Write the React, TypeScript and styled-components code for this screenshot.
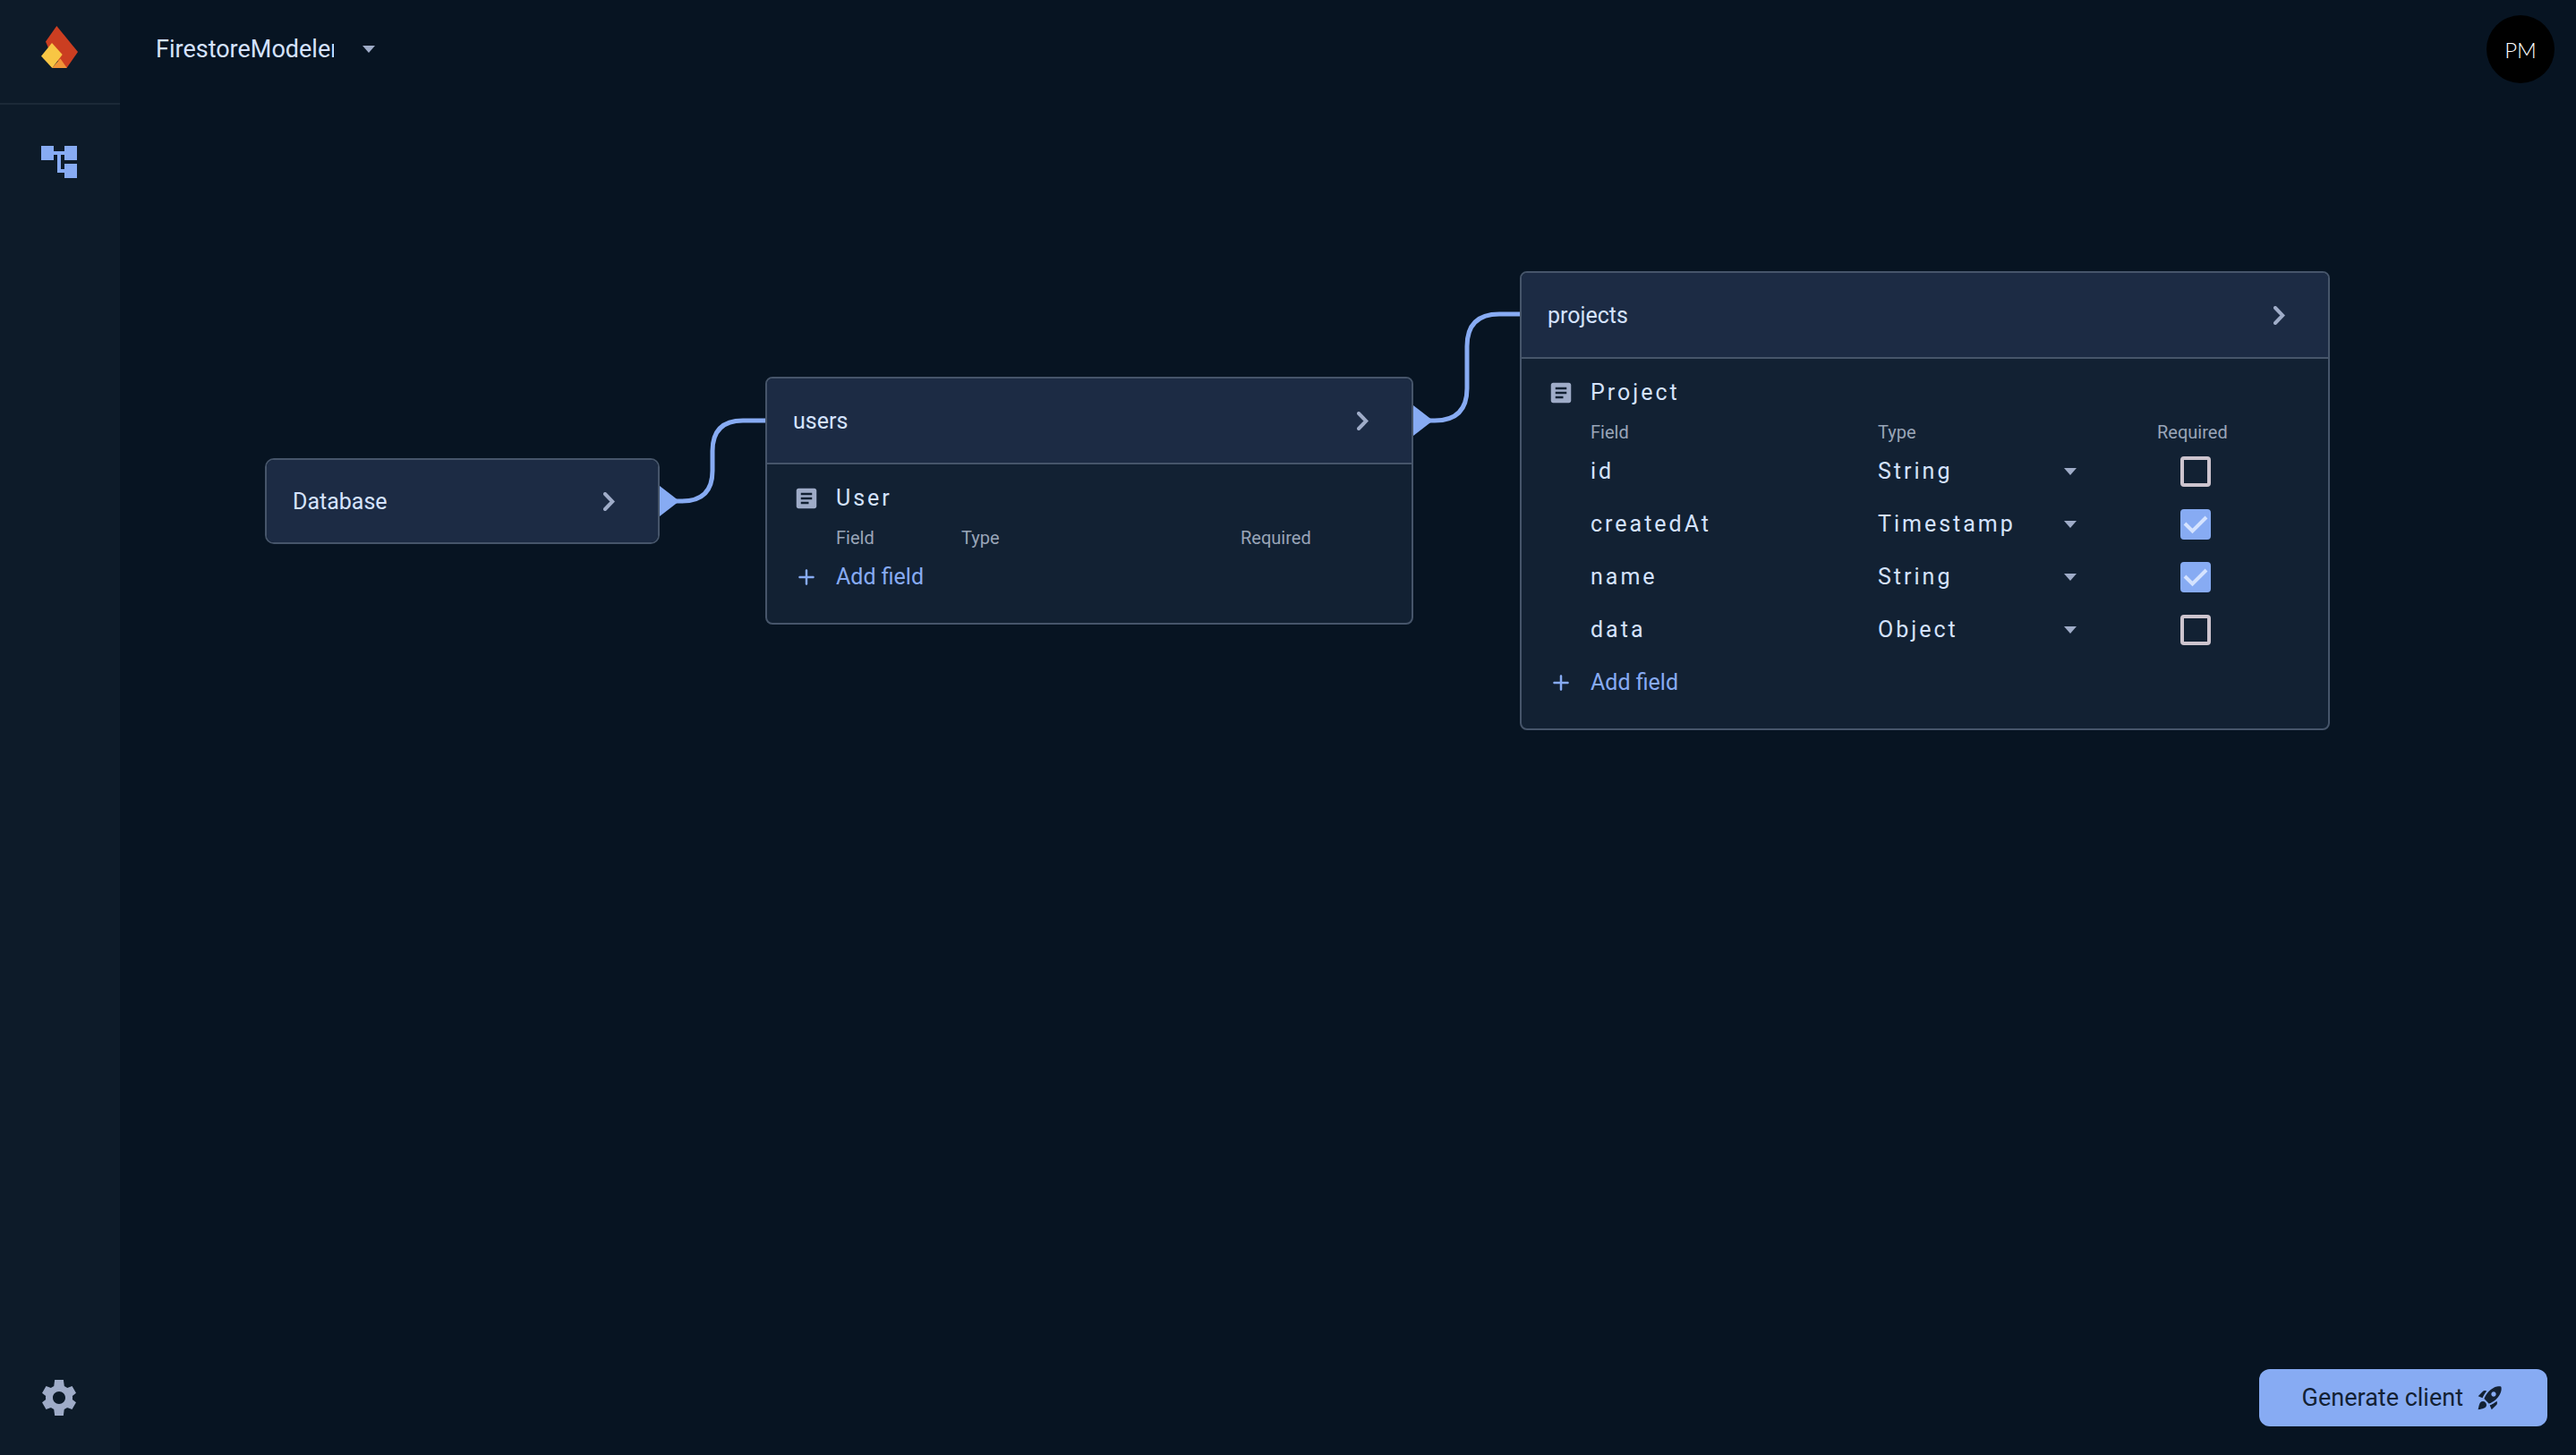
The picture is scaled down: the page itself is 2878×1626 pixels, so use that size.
import React, { useState } from "react";
import styled, { createGlobalStyle } from "styled-components";

const color = {
  canvas: "#071422",
  rail: "#0d1b29",
  railLine: "#1b2937",
  cardHead: "#1c2b44",
  cardBody: "#122133",
  border: "#46556a",
  text: "#d5e3ff",
  muted: "#99a5b8",
  icon: "#9facc8",
  accent: "#87abf3",
  accentText: "#132133",
  box: "#cdc4ce",
};

const GlobalStyle = createGlobalStyle`
  *, *::before, *::after { box-sizing: border-box; }
  body {
    margin: 0;
    background: ${color.canvas};
    color: ${color.text};
    font-family: Roboto, "Liberation Sans", sans-serif;
  }
  button, select, input {
    margin: 0;
    padding: 0;
    border: 0;
    background: none;
    color: inherit;
    font: inherit;
  }
  button { cursor: pointer; }
  svg { display: block; }
`;

const Shell = styled.div`
  display: grid;
  grid-template-columns: 134px 1fr;
  min-height: 100vh;
`;

const Rail = styled.nav`
  display: flex;
  flex-direction: column;
  background: ${color.rail};
`;

const RailLogo = styled.a`
  display: grid;
  place-items: center;
  height: 117px;
  padding: 0 2px 10px 0;
  border-bottom: 2px solid ${color.railLine};
`;

const RailItems = styled.div`
  display: flex;
  flex: 1;
  flex-direction: column;
  align-items: center;
  justify-content: space-between;
  padding: 40px 2px 40px 0;
`;

const RailButton = styled.button<{ $active?: boolean }>`
  color: ${(p) => (p.$active ? color.accent : color.icon)};
`;

const Main = styled.main`
  display: flex;
  flex-direction: column;
  min-width: 0;
`;

const TopBar = styled.header`
  display: flex;
  align-items: center;
  justify-content: space-between;
  height: 110px;
  padding: 0 24px 0 40px;
`;

const ProjectPicker = styled.label`
  display: flex;
  align-items: center;
  gap: 32px;
  color: ${color.icon};
`;

const ProjectSelect = styled.select`
  appearance: none;
  width: 199px;
  overflow: hidden;
  color: ${color.text};
  font-size: 27px;
  line-height: 36px;
`;

const Avatar = styled.button`
  width: 76px;
  height: 76px;
  border-radius: 50%;
  background: #000;
  color: #fff;
  font-family: Lato, sans-serif;
  font-size: 24px;
  font-weight: 300;
`;

const Canvas = styled.section`
  position: relative;
  flex: 1;
  overflow: hidden;
`;

const Links = styled.svg`
  position: absolute;
  top: 0;
  left: 0;
  width: 100%;
  height: 100%;
`;

const Card = styled.article<{ $x: number; $y: number; $width: number; $open: boolean }>`
  position: absolute;
  top: ${(p) => p.$y}px;
  left: ${(p) => p.$x}px;
  width: ${(p) => p.$width}px;
  overflow: hidden;
  border: 2px solid ${color.border};
  border-radius: ${(p) => (p.$open ? 8 : 10)}px;
  background: ${color.cardBody};
`;

const CardHead = styled.header<{ $open: boolean }>`
  display: flex;
  align-items: center;
  justify-content: space-between;
  height: ${(p) => (p.$open ? 96 : 92)}px;
  padding: 0 48px 0 29px;
  border-bottom: ${(p) => (p.$open ? `2px solid ${color.border}` : "0")};
  background: ${color.cardHead};
  color: ${color.icon};
`;

const CardTitle = styled.h2`
  margin: 0;
  color: ${color.text};
  font-size: 25px;
  font-weight: 400;
`;

const CardBody = styled.div`
  padding: 8px 0 22px;
`;

const IconRow = styled.div`
  display: grid;
  grid-template-columns: 32px 1fr;
  align-items: center;
  justify-items: start;
  gap: 16px;
  height: 59px;
  padding-left: 29px;
  color: ${color.icon};
`;

const ModelName = styled.h3`
  margin: 0;
  color: ${color.text};
  font-size: 25px;
  font-weight: 400;
  letter-spacing: 3px;
`;

const FieldTable = styled.table`
  width: 100%;
  table-layout: fixed;
  border-spacing: 0;
`;

const HeadCell = styled.th<{ $width?: number; $first?: boolean }>`
  width: ${(p) => (p.$width ? `${p.$width}px` : "auto")};
  height: 29px;
  padding: 0 0 0 ${(p) => (p.$first ? 77 : 0)}px;
  color: ${color.muted};
  font-size: 20px;
  font-weight: 400;
  line-height: 24px;
  text-align: left;
`;

const NameCell = styled.th`
  height: 59px;
  padding: 0 0 0 77px;
  font-size: 25px;
  font-weight: 400;
  letter-spacing: 3px;
  line-height: 32px;
  text-align: left;
`;

const Cell = styled.td`
  height: 59px;
  padding: 0;
`;

const TypePicker = styled.label`
  display: grid;
  align-items: center;
  width: 222px;
  color: ${color.icon};

  > * { grid-area: 1 / 1; }
  > svg { justify-self: end; pointer-events: none; }
`;

const TypeSelect = styled.select`
  appearance: none;
  color: ${color.text};
  font-size: 25px;
  letter-spacing: 3px;
  line-height: 32px;
`;

const Tick = styled.label`
  display: grid;
  width: 34px;
  height: 34px;
  margin-left: 26px;
  color: ${color.text};

  > * { grid-area: 1 / 1; }
  > svg { visibility: hidden; pointer-events: none; }
  > input:checked + svg { visibility: visible; }
`;

const TickBox = styled.input`
  appearance: none;
  border: 4px solid ${color.box};
  border-radius: 4px;

  &:checked {
    border-color: ${color.accent};
    background: ${color.accent};
  }
`;

const AddField = styled(IconRow).attrs({ as: "button", type: "button" })`
  width: 100%;
  color: ${color.accent};
  font-size: 25px;
`;

const Generate = styled.button`
  position: absolute;
  right: 32px;
  bottom: 32px;
  display: flex;
  align-items: center;
  gap: 14px;
  height: 64px;
  padding: 0 48px;
  border-radius: 12px;
  background: ${color.accent};
  color: ${color.accentText};
  font-size: 27px;
`;

const Glyph = ({ d, size }: { d: string; size: number }) => (
  <svg width={size} height={size} viewBox="0 0 24 24" fill="currentColor" aria-hidden="true">
    <path d={d} />
  </svg>
);

const glyphs = {
  tree: "M22 11V3h-7v3H9V3H2v8h7V8h2v10h4v3h7v-8h-7v3h-2V8h2v3z",
  gear: "M19.44 12.99l.01-.02c.04-.31.07-.64.07-.97 0-.33-.03-.66-.07-1l.01.02 2.04-1.62-2.23-3.92-2.67.96.01.01c-.52-.4-1.09-.74-1.71-1h.01L14.44 2H9.57l-.44 3.45h.01c-.62.26-1.19.6-1.71 1l.01-.01-2.68-.97-2.24 3.92 2.04 1.63.01-.02c-.04.33-.07.66-.07.99 0 .33.03.66.07.97l.01.02-2.06 1.63 2.24 3.92 2.68-.97-.02-.04c.53.41 1.1.75 1.73 1.01h-.03L9.58 22h4.85l.44-3.47h-.01c.62-.26 1.2-.6 1.73-1.01l-.02.04 2.68.97 2.24-3.92zM12 15.5c-1.93 0-3.5-1.57-3.5-3.5s1.57-3.5 3.5-3.5 3.5 1.57 3.5 3.5-1.57 3.5-3.5 3.5z",
  article:
    "M19 3H5c-1.1 0-2 .9-2 2v14c0 1.1.9 2 2 2h14c1.1 0 2-.9 2-2V5c0-1.1-.9-2-2-2zm-5 14H7v-2h7v2zm3-4H7v-2h10v2zm0-4H7V7h10v2z",
  add: "M18 13h-5v5c0 .55-.45 1-1 1s-1-.45-1-1v-5H6c-.55 0-1-.45-1-1s.45-1 1-1h5V6c0-.55.45-1 1-1s1 .45 1 1v5h5c.55 0 1 .45 1 1s-.45 1-1 1z",
  rocket:
    "M9.19 6.35c-2.04 2.29-3.44 5.58-3.57 5.89L2 10.69l4.05-4.05c.47-.47 1.15-.68 1.81-.55l1.33.26zM11.17 17s3.74-1.55 5.89-3.7c5.4-5.4 4.5-9.62 4.21-10.57-.95-.3-5.17-1.19-10.57 4.21C8.55 9.09 7 12.83 7 12.83L11.17 17zm6.48-2.19c-2.29 2.04-5.58 3.44-5.89 3.57L13.31 22l4.05-4.05c.47-.47.68-1.15.55-1.81l-.26-1.33zM9 18c0 .83-.34 1.58-.88 2.12C6.94 21.3 2 22 2 22s.7-4.94 1.88-6.12C4.42 15.34 5.17 15 6 15c1.66 0 3 1.34 3 3zm4-9c0-1.1.9-2 2-2s2 .9 2 2-.9 2-2 2-2-.9-2-2z",
};

const FlameLogo = () => (
  <svg width="41" height="47" viewBox="0 0 41 47" aria-hidden="true">
    <path d="M17.3 0 41 29 28.5 47 12 34 5 17.5z" fill="#cb3e21" />
    <path d="M12 47 21.5 36.5 28.8 47z" fill="#f09437" />
    <path d="M12 19 23.7 32 12.3 47 0 33.7z" fill="#f8c644" />
  </svg>
);

const Chevron = () => (
  <svg width="13" height="21" viewBox="0 0 13 21" fill="none" stroke="currentColor" strokeWidth="4" strokeLinecap="round" aria-hidden="true">
    <path d="M2 2 10.3 10.5 2 19" />
  </svg>
);

const Caret = () => (
  <svg width="14" height="8" viewBox="0 0 14 8" fill="currentColor" aria-hidden="true">
    <path d="M0 0h14L7 8z" />
  </svg>
);

const types = ["String", "Timestamp", "Object", "Number", "Boolean"];

type Field = { name: string; type: string; required: boolean };
type Node = { title: string; x: number; y: number; width: number; model?: string; fields?: Field[] };

const nodes: Node[] = [
  { title: "Database", x: 162, y: 402, width: 441 },
  { title: "users", x: 721, y: 311, width: 724, model: "User", fields: [] },
  {
    title: "projects",
    x: 1564,
    y: 193,
    width: 905,
    model: "Project",
    fields: [
      { name: "id", type: "String", required: false },
      { name: "createdAt", type: "Timestamp", required: true },
      { name: "name", type: "String", required: true },
      { name: "data", type: "Object", required: false },
    ],
  },
];

/* A connector leaves the right edge of one card and enters the head of the next. */
const links = [
  { x1: 603, y1: 450, x2: 721, y2: 360, mid: 662, r: 34 },
  { x1: 1445, y1: 360, x2: 1564, y2: 241, mid: 1505, r: 36 },
];

function FieldRow({ field }: { field: Field }) {
  const [type, setType] = useState(field.type);
  const [required, setRequired] = useState(field.required);
  return (
    <tr>
      <NameCell scope="row">{field.name}</NameCell>
      <Cell>
        <TypePicker>
          <TypeSelect aria-label={`${field.name} type`} value={type} onChange={(e) => setType(e.target.value)}>
            {types.map((t) => (
              <option key={t}>{t}</option>
            ))}
          </TypeSelect>
          <Caret />
        </TypePicker>
      </Cell>
      <Cell>
        <Tick>
          <TickBox
            type="checkbox"
            aria-label={`${field.name} required`}
            checked={required}
            onChange={(e) => setRequired(e.target.checked)}
          />
          <svg width="34" height="34" viewBox="0 0 34 34" fill="none" stroke="currentColor" strokeWidth="4" aria-hidden="true">
            <path d="M5 16 13.5 24.5 29 9" />
          </svg>
        </Tick>
      </Cell>
    </tr>
  );
}

function NodeCard({ node }: { node: Node }) {
  const open = Boolean(node.model);
  return (
    <Card $x={node.x} $y={node.y} $width={node.width} $open={open}>
      <CardHead $open={open}>
        <CardTitle>{node.title}</CardTitle>
        <button type="button" aria-label={`Expand ${node.title}`}>
          <Chevron />
        </button>
      </CardHead>
      {open && (
        <CardBody>
          <IconRow>
            <Glyph d={glyphs.article} size={30} />
            <ModelName>{node.model}</ModelName>
          </IconRow>
          <FieldTable>
            <thead>
              <tr>
                <HeadCell scope="col" $first>Field</HeadCell>
                <HeadCell scope="col" $width={312}>Type</HeadCell>
                <HeadCell scope="col" $width={191}>Required</HeadCell>
              </tr>
            </thead>
            <tbody>
              {node.fields?.map((f) => (
                <FieldRow key={f.name} field={f} />
              ))}
            </tbody>
          </FieldTable>
          <AddField>
            <Glyph d={glyphs.add} size={30} />
            <span>Add field</span>
          </AddField>
        </CardBody>
      )}
    </Card>
  );
}

export default function App() {
  return (
    <>
      <GlobalStyle />
      <Shell>
        <Rail aria-label="Main">
          <RailLogo href="#" aria-label="Home">
            <FlameLogo />
          </RailLogo>
          <RailItems>
            <RailButton type="button" $active aria-label="Model">
              <Glyph d={glyphs.tree} size={48} />
            </RailButton>
            <RailButton type="button" aria-label="Settings">
              <Glyph d={glyphs.gear} size={48} />
            </RailButton>
          </RailItems>
        </Rail>
        <Main>
          <TopBar>
            <ProjectPicker>
              <ProjectSelect aria-label="Project" defaultValue="FirestoreModeler">
                <option>FirestoreModeler</option>
              </ProjectSelect>
              <Caret />
            </ProjectPicker>
            <Avatar type="button">PM</Avatar>
          </TopBar>
          <Canvas>
            <Links aria-hidden="true">
              {links.map((l) => (
                <g key={l.x1}>
                  <path
                    d={`M${l.x1} ${l.y1}H${l.mid - l.r}Q${l.mid} ${l.y1} ${l.mid} ${l.y1 - l.r}V${l.y2 + l.r}Q${l.mid} ${l.y2} ${l.mid + l.r} ${l.y2}H${l.x2}`}
                    fill="none"
                    stroke={color.accent}
                    strokeWidth="5"
                  />
                  <path d={`M${l.x1} ${l.y1 - 17}l22 17-22 17z`} fill={color.accent} />
                </g>
              ))}
            </Links>
            {nodes.map((n) => (
              <NodeCard key={n.title} node={n} />
            ))}
            <Generate type="button">
              Generate client
              <Glyph d={glyphs.rocket} size={32} />
            </Generate>
          </Canvas>
        </Main>
      </Shell>
    </>
  );
}
